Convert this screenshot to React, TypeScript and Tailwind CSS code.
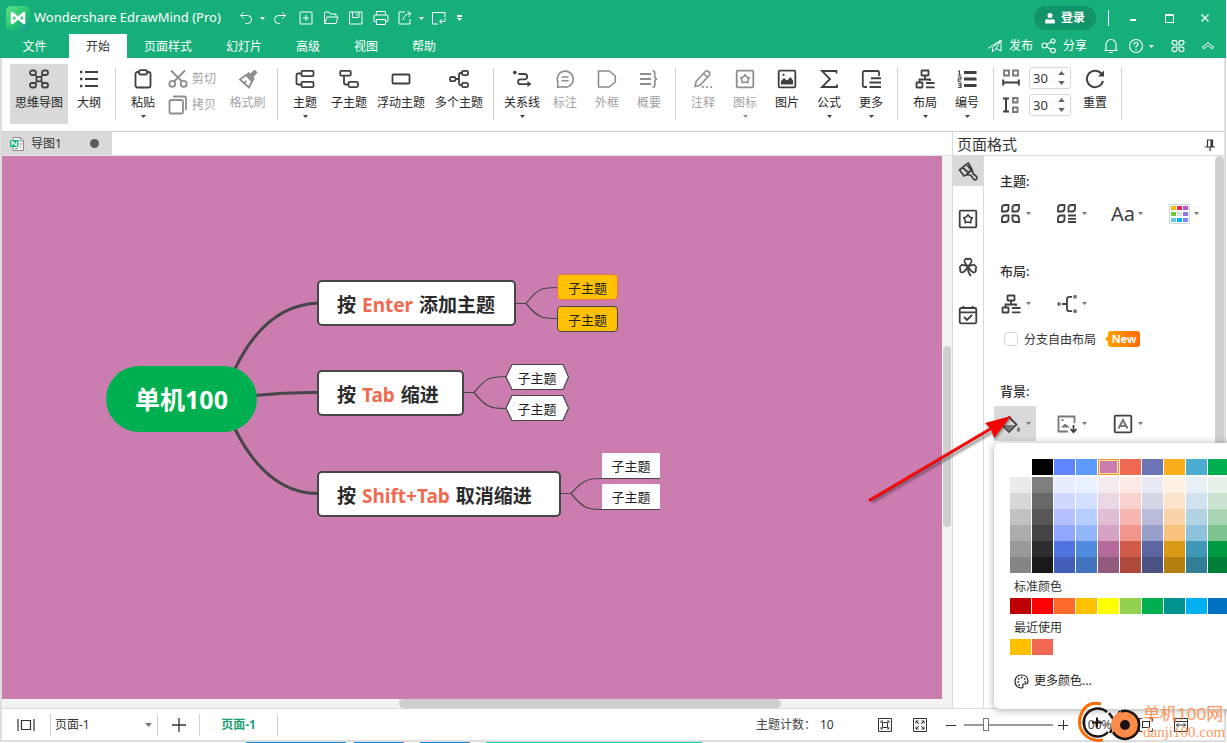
import type { ReactNode } from "react";

type IconProps = { children: ReactNode; className?: string; w?: number; h?: number };

// Stroke icon on a 20x20 grid
function Icon({ children, className = "", w = 20, h = 20 }: IconProps) {
  return (
    <svg
      width={w}
      height={h}
      viewBox={`0 0 ${w} ${h}`}
      fill="none"
      stroke="currentColor"
      strokeWidth="1.8"
      className={`shrink-0 ${className}`}
      aria-hidden="true"
    >
      {children}
    </svg>
  );
}

function Caret({ className = "" }: { className?: string }) {
  return (
    <svg width="5" height="3" viewBox="0 0 5 3" fill="currentColor" className={`shrink-0 ${className}`} aria-hidden="true">
      <path d="M0 0h5L2.5 3z" />
    </svg>
  );
}

const icons = {
  mindmap: (
    <Icon>
      <rect x="1" y="1.5" width="6" height="4.5" rx="2" />
      <rect x="13" y="1.5" width="6" height="4.5" rx="2" />
      <rect x="1" y="14" width="6" height="4.5" rx="2" />
      <rect x="13" y="14" width="6" height="4.5" rx="2" />
      <rect x="7.5" y="7.8" width="5" height="4.5" rx="1" />
      <path d="M6 5.5l2 2.5M14 5.5l-2 2.5M6 14.5l2-2.5M14 14.5l-2-2.5" />
    </Icon>
  ),
  outline: (
    <Icon>
      <path d="M6 3h13M6 10h13M6 17h13" strokeWidth="2" />
      <path d="M1 3h2.4M1 10h2.4M1 17h2.4" strokeWidth="2.4" />
    </Icon>
  ),
  paste: (
    <Icon>
      <rect x="2.5" y="3" width="15" height="15.5" rx="2" />
      <rect x="6" y="1.2" width="8" height="4.3" rx="1.5" fill="white" />
    </Icon>
  ),
  cut: (
    <Icon>
      <circle cx="4.3" cy="14.8" r="3" />
      <circle cx="15.7" cy="14.8" r="3" />
      <path d="M3 1.5l11 11M17 1.5l-11 11" />
    </Icon>
  ),
  copy: (
    <Icon>
      <rect x="1.5" y="5" width="13.5" height="13.5" rx="1.5" />
      <path d="M5 1.5h11a2 2 0 0 1 2 2V15" />
    </Icon>
  ),
  brush: (
    <Icon>
      <path d="M2 10.5l6-4.5 6 6.5-3 6z" />
      <path d="M8 6l2.5-2.5 2 1.5 4-4 2.5 2.5-3.5 4 .5 3-2 2z" fill="currentColor" strokeWidth="1" />
      <path d="M6.5 13.5l2-1.5" />
    </Icon>
  ),
  topic: (
    <Icon>
      <rect x="6.5" y="1.9" width="12" height="5.2" rx="1" />
      <rect x="6.5" y="12.9" width="12" height="5.2" rx="1" />
      <path d="M6.5 4.5H3A1.5 1.5 0 0 0 1.500 6v8A1.5 1.5 0 0 0 3 15.500h3.500" />
    </Icon>
  ),
  subtopic: (
    <Icon>
      <rect x="1.2" y="1.9" width="10.5" height="4.7" rx="1" />
      <rect x="9.5" y="12.9" width="9.500" height="5.2" rx="1.5" />
      <path d="M5 7v7a1.5 1.5 0 0 0 1.500 1.500h3" />
    </Icon>
  ),
  floating: (
    <Icon>
      <rect x="1.5" y="5.5" width="17" height="9" rx="1" />
    </Icon>
  ),
  multi: (
    <Icon>
      <rect x="1" y="8" width="5.5" height="4.2" rx="1.5" />
      <rect x="13" y="1.8" width="6" height="4.4" rx="1.5" />
      <rect x="13" y="13.8" width="6" height="4.4" rx="1.5" />
      <path d="M6.5 10H10M13 4h-1.500A1.5 1.5 0 0 0 10 5.500v9a1.5 1.5 0 0 0 1.500 1.500H13" />
    </Icon>
  ),
  relation: (
    <Icon>
      <circle cx="2.8" cy="3.500" r="1.4" fill="currentColor" strokeWidth="1" />
      <path d="M6.5 5H13a2.7 2.7 0 0 1 0 5.300H8.500a2.4 2.4 0 0 0 0 4.900H16" />
      <path d="M15.5 12v6l4-3z" fill="currentColor" stroke="none" />
    </Icon>
  ),
  callout: (
    <Icon>
      <path d="M2.5 18.200l.5-4.700A8 8 0 1 1 8 17.800z" strokeWidth="1.6" strokeLinejoin="round" />
      <path d="M6.5 8h7M6.5 11.800h7" strokeWidth="1.6" />
    </Icon>
  ),
  boundary: (
    <Icon>
      <path d="M1.5 2h10.800l6 5v6l-6 5H1.500z" strokeWidth="1.6" strokeLinejoin="round" />
    </Icon>
  ),
  summary: (
    <Icon>
      <path d="M1 5h11M1 10h11M1 15h11" />
      <path d="M13.5 1.800q2.300 0 2.300 2.200v3.500q0 2 2.200 2.500-2.200.5-2.200 2.500V16q0 2.200-2.300 2.200" strokeWidth="1.6" />
    </Icon>
  ),
  note: (
    <Icon>
      <path d="M2 17.500l1.200-5.200 9.300-10q1.200-1 2.500 0l1.500 1.400q1 1.200 0 2.400L7 16.200zM10.500 4.500l4 3.800" strokeWidth="1.6" strokeLinejoin="round" />
      <path d="M8.5 18h2.500M13 18h2M17 18h2" strokeWidth="1.6" />
    </Icon>
  ),
  mark: (
    <Icon>
      <rect x="1.7" y="1.7" width="16.6" height="16.6" rx="1" />
      <path d="M10 5.700l1.700 2.200 2.700.8-1.600 2.400v2.700l-2.800-.8-2.800.8v-2.700L5.600 8.700l2.700-.8z" strokeWidth="1.6" strokeLinejoin="round" />
    </Icon>
  ),
  picture: (
    <Icon>
      <rect x="1.7" y="1.7" width="16.6" height="16.6" rx="1" />
      <path d="M4 15.500v-3.500l3-3 3 2.500L13.500 8l2.500 3.500v4z" fill="currentColor" stroke="none" />
      <path d="M5.5 5.800h2" strokeWidth="2" />
    </Icon>
  ),
  formula: (
    <Icon>
      <path d="M17.5 4.500V2H3l8 8-8 8h15v-2.500" />
    </Icon>
  ),
  more: (
    <Icon>
      <path d="M18 7V3.500Q18 2 16.500 2H3.500Q1.800 2 1.800 3.500v13Q1.800 18 3.500 18H6" />
      <path d="M10 9.200h10M8.500 13.500H20M8.500 18H20" strokeWidth="2" />
    </Icon>
  ),
  layout: (
    <Icon>
      <rect x="6.5" y="1.5" width="7" height="5" rx="0.5" />
      <rect x="1.5" y="13.5" width="6" height="5" rx="0.5" />
      <path d="M10 6.500v3.500M4.500 13.500V10.500h10.500v1.500M11 14h8.500M11 18.300h8.500" />
    </Icon>
  ),
  numbering: (
    <Icon>
      <path d="M7 3.500h12.500M7 10h12.500M7 16.500h12.500" strokeWidth="3" />
      <path d="M1 2h1.500v4M1 6h3.300M1 8h3v2H1.300v2.200h3M1 14.300h3v4.200H1M1.500 16.400h2.500" strokeWidth="1.1" />
    </Icon>
  ),
  hspace: (
    <Icon w={18}>
      <path d="M2 2.500h5v5H2zM11 2.500h5v5h-5z" stroke="#777" />
      <path d="M1.200 11.500v6M16.800 11.500v6M1.500 14.500h15" strokeWidth="2" />
    </Icon>
  ),
  vspace: (
    <Icon w={18}>
      <path d="M11 3h4.500v4.500H11zM11 12.500h4.500V17H11z" stroke="#777" />
      <path d="M1 3.500h6M1 16.500h6M4 3.500v13" strokeWidth="2" />
    </Icon>
  ),
  reset: (
    <Icon>
      <path d="M17 5.500A8.200 8.200 0 1 0 18 12" strokeWidth="2" />
      <path d="M19 1.500v6h-6z" fill="currentColor" stroke="none" />
    </Icon>
  ),
};

type ToolProps = { icon: ReactNode; label: string; width?: string; caret?: boolean; muted?: boolean; active?: boolean };

function Tool({ icon, label, width = "w-[42px]", caret, muted, active }: ToolProps) {
  return (
    <button
      type="button"
      className={`flex h-[60px] shrink-0 flex-col items-center whitespace-nowrap pt-[5px] text-xs ${width} ${
        active ? "bg-[#d9d9d9]" : ""
      } ${muted ? "text-[#8e8e8e]" : "text-[#404040]"}`}
    >
      {icon}
      <span className={`mt-[6px] leading-4 ${muted ? "text-[#a3a3a3]" : "text-[#262626]"}`}>{label}</span>
      {caret && <Caret className="mt-1" />}
    </button>
  );
}

function Divider() {
  return <div className="ml-[5px] mr-[6px] mt-1 h-[52px] w-px shrink-0 bg-[#cfcfcf]" />;
}

function SpinBox({ label }: { label: string }) {
  return (
    <div className="flex h-[22px] w-[42px] items-center rounded-[3px] border border-[#d6d6dc] bg-white">
      <input type="text" aria-label={label} defaultValue="30" className="w-[28px] bg-transparent pl-[3px] text-[13px] leading-4 text-[#333] outline-none" />
      <div className="flex flex-col gap-[6px] text-[#666]">
        <button type="button" aria-label={`${label} +`} className="leading-none">
          <Caret className="h-[4px] w-[7px] rotate-180" />
        </button>
        <button type="button" aria-label={`${label} -`} className="leading-none">
          <Caret className="h-[4px] w-[7px]" />
        </button>
      </div>
    </div>
  );
}

const menuTabs = [
  { label: "文件", cls: "w-[69px] text-white" },
  { label: "开始", cls: "w-[58px] bg-white text-[#333]" },
  { label: "页面样式", cls: "w-[82px] text-white" },
  { label: "幻灯片", cls: "w-[70px] text-white" },
  { label: "高级", cls: "w-[58px] text-white" },
  { label: "视图", cls: "w-[58px] text-white" },
  { label: "帮助", cls: "w-[58px] text-white" },
];

const quickActions = [
  { name: "撤销", cls: "w-[24px]", d: "M6 2L2.500 5.500 6 9M3 5.500h6.500a4 4 0 0 1 0 8H7" },
  { name: "撤销选项", cls: "w-[8px]", caret: true },
  { name: "重做", cls: "w-[28px]", d: "M10 2l3.500 3.500L10 9M13 5.500H6.500a4 4 0 0 0 0 8H8" },
  { name: "新建", cls: "w-[24px]", d: "M2.500 2h11q.5 0 .5.500v11q0 .5-.5.500h-11q-.5 0-.5-.500v-11q0-.5.5-.500zM8 5v6M5 8h6" },
  { name: "打开", cls: "w-[25px]", d: "M1.500 13V3q0-1 1-1h3.500l1.500 2h5.500v2.500M1.500 13.500L4 7h11l-2 6.500z" },
  { name: "保存", cls: "w-[25px]", d: "M1.500 2h12.500v12H1.500zM4.500 2v5.500h6.500V2M9 3.500v2" },
  { name: "打印", cls: "w-[25px]", d: "M3.500 5V1.500h9V5M3.500 11.500h-2.500V6q0-1 1-1h12q1 0 1 1v5.500h-2.500M3.500 9.500h9v5h-9z" },
  { name: "导出", cls: "w-[24px]", d: "M8 2H2v12h11V9M6 10q.5-5.500 7.500-6.500M10.500 1.500l3.500 2L11.500 7" },
  { name: "导出选项", cls: "w-[8px]", caret: true },
  { name: "转换", cls: "w-[28px]", d: "M7 14H1.500V2.500H14V7M14 8v3.500H9M11 9l-2.500 2.500L11 14" },
];

function Header() {
  return (
    <header className="flex h-[58px] shrink-0 justify-between bg-[#16ae79] text-white">
      <div className="flex flex-col justify-between">
        <div className="flex h-[34px] items-center pl-[6px] pt-[2px]">
          <svg width="24" height="24" viewBox="0 0 24 24" aria-hidden="true">
            <defs>
              <linearGradient id="logo" x1="0" y1="0" x2="1" y2="1">
                <stop offset="0" stopColor="#5be584" />
                <stop offset="0.6" stopColor="#22c06f" />
                <stop offset="1" stopColor="#1698a4" />
              </linearGradient>
            </defs>
            <rect width="24" height="24" rx="5" fill="url(#logo)" />
            <path d="M6 17V7l12 10V7l-5.500 4.500M6 17l4.500-3.500" fill="none" stroke="white" strokeWidth="2.6" strokeLinejoin="round" strokeLinecap="round" />
          </svg>
          <span className="w-[204px] whitespace-nowrap pl-1 text-[13px]">Wondershare EdrawMind (Pro)</span>
          {quickActions.map((a) => (
            <button key={a.name} type="button" aria-label={a.name} className={`flex justify-center ${a.cls}`}>
              {a.caret ? (
                <Caret />
              ) : (
                <svg width="16" height="16" viewBox="0 0 16 16" fill="none" stroke="currentColor" strokeLinejoin="round" aria-hidden="true">
                  <path d={a.d} />
                </svg>
              )}
            </button>
          ))}
          <button type="button" aria-label="自定义" className="flex w-[12px] flex-col items-center gap-px">
            <span className="h-[2px] w-[5px] bg-white" />
            <Caret />
          </button>
        </div>
        <nav className="flex h-[24px]">
          {menuTabs.map((t) => (
            <button key={t.label} type="button" className={`pt-px text-center text-xs ${t.cls}`}>
              {t.label}
            </button>
          ))}
        </nav>
      </div>

      <div className="flex flex-col justify-between pr-[3px]">
        <div className="flex h-[34px] items-center justify-end pt-[2px]">
          <button type="button" className="flex h-6 w-[62px] items-center justify-center gap-[6px] rounded-full bg-[#12936a] text-xs font-bold">
            <svg width="10" height="11" viewBox="0 0 10 11" fill="currentColor" aria-hidden="true">
              <circle cx="5" cy="2.5" r="2.5" />
              <path d="M0 9q0-3 3-3l2 1 2-1q3 0 3 3 0 1.500-1 1.500H1Q0 10.500 0 9z" />
            </svg>
            登录
          </button>
          <span className="ml-[12px] mr-[6px] h-4 w-px bg-white" />
          <button type="button" aria-label="最小化" className="flex w-9 justify-center">
            <span className="mt-1 h-[2px] w-[6px] bg-white" />
          </button>
          <button type="button" aria-label="最大化" className="flex w-9 justify-center">
            <span className="h-[9px] w-[9px] border border-t-2 border-white" />
          </button>
          <button type="button" aria-label="关闭" className="flex w-9 justify-center">
            <svg width="8" height="8" viewBox="0 0 8 8" stroke="white" strokeWidth="1.3" aria-hidden="true">
              <path d="M0.5 0.500l7 7M7.500 0.500l-7 7" />
            </svg>
          </button>
        </div>
        <div className="flex h-[24px] items-center justify-end text-xs">
          <button type="button" className="flex items-center gap-[6px]">
            <Icon w={16} h={16}>
              <path d="M1 10.500L14 2v11l-5-2.500L14 2 5.500 9.500V14l3.500-3.500" strokeWidth="1" strokeLinejoin="round" />
            </Icon>
            发布
          </button>
          <button type="button" className="ml-2 flex items-center gap-[6px]">
            <Icon w={16} h={16}>
              <circle cx="3.5" cy="7.5" r="2.5" strokeWidth="1.1" />
              <circle cx="12" cy="3" r="2" strokeWidth="1.1" />
              <circle cx="12" cy="12.5" r="2.3" strokeWidth="1.1" />
              <path d="M6 6.500L10 4M6 9l4 2.500" strokeWidth="1.1" />
            </Icon>
            分享
          </button>
          <button type="button" aria-label="通知" className="ml-4">
            <Icon w={16} h={16}>
              <path d="M3 12.500V6.500a5 5 0 0 1 10 0v6M1.500 12.500h13M6.500 14.500h3" strokeWidth="1.1" />
            </Icon>
          </button>
          <button type="button" aria-label="帮助中心" className="ml-[9px] flex items-center gap-[5px]">
            <Icon w={16} h={16}>
              <circle cx="8" cy="8" r="6.5" strokeWidth="1.1" />
              <path d="M6 6.500q0-2 2-2t2 1.800q0 1.200-2 2.200v1M8 10.800v1.200" strokeWidth="1.2" />
            </Icon>
            <Caret />
          </button>
          <button type="button" aria-label="应用" className="ml-[17px]">
            <Icon w={14} h={14}>
              <path d="M6 6H3.500A2.500 2.300 0 1 1 6 3.500zM8 6h2.500A2.500 2.300 0 1 0 8 3.500zM6 8H3.500A2.500 2.300 0 1 0 6 10.500zM8 8h2.500A2.500 2.300 0 1 1 8 10.500z" strokeWidth="1.1" />
            </Icon>
          </button>
          <button type="button" aria-label="收起功能区" className="ml-4 mr-2">
            <Icon w={14} h={14}>
              <path d="M1 8.500L7 3.500l6 5-2 1-4-3-4 3z" strokeWidth="1" />
            </Icon>
          </button>
        </div>
      </div>
    </header>
  );
}

function Ribbon() {
  return (
    <div className="flex h-[74px] shrink-0 items-start border-b border-[#d0d0d0] bg-white pl-2 pt-[6px]">
      <Tool icon={icons.mindmap} label="思维导图" width="w-[58px]" active />
      <Tool icon={icons.outline} label="大纲" />
      <Divider />
      <Tool icon={icons.paste} label="粘贴" caret />
      <div className="flex w-[59px] shrink-0 flex-col gap-[6px] pl-1 pt-[5px] text-xs">
        <button type="button" className="flex h-5 items-center gap-1 whitespace-nowrap text-[#a3a3a3]">
          <span className="text-[#8e8e8e]">{icons.cut}</span>剪切
        </button>
        <button type="button" className="flex h-5 items-center gap-1 whitespace-nowrap text-[#a3a3a3]">
          <span className="text-[#8e8e8e]">{icons.copy}</span>拷贝
        </button>
      </div>
      <Tool icon={icons.brush} label="格式刷" width="w-[49px]" muted />
      <Divider />
      <Tool icon={icons.topic} label="主题" caret />
      <Tool icon={icons.subtopic} label="子主题" width="w-[46px]" />
      <Tool icon={icons.floating} label="浮动主题" width="w-[58px]" />
      <Tool icon={icons.multi} label="多个主题" width="w-[58px]" />
      <Divider />
      <Tool icon={icons.relation} label="关系线" width="w-[44px]" caret />
      <Tool icon={icons.callout} label="标注" muted />
      <Tool icon={icons.boundary} label="外框" muted />
      <Tool icon={icons.summary} label="概要" muted />
      <Divider />
      <Tool icon={icons.note} label="注释" muted />
      <Tool icon={icons.mark} label="图标" muted caret />
      <Tool icon={icons.picture} label="图片" />
      <Tool icon={icons.formula} label="公式" caret />
      <Tool icon={icons.more} label="更多" caret />
      <Divider />
      <Tool icon={icons.layout} label="布局" caret />
      <Tool icon={icons.numbering} label="编号" caret />
      <Divider />
      <div className="flex w-[74px] shrink-0 flex-col gap-[5px] pl-[2px] pt-[3px] text-[#404040]">
        <div className="flex items-center gap-[9px]">
          {icons.hspace}
          <SpinBox label="水平间距" />
        </div>
        <div className="flex items-center gap-[9px]">
          {icons.vspace}
          <SpinBox label="垂直间距" />
        </div>
      </div>
      <Tool icon={icons.reset} label="重置" />
      <Divider />
    </div>
  );
}

function Branch({ place, keys, after }: { place: string; keys: string; after: string }) {
  return (
    <div
      className={`absolute left-[315px] flex h-[46px] items-center gap-[6px] whitespace-nowrap rounded-[5px] border-2 border-[#464646] bg-white pl-[18px] pt-1 text-[19px] font-bold text-[#2b2b2b] ${place}`}
    >
      <span>按</span>
      <span className="text-[#f06a52]">{keys}</span>
      <span>{after}</span>
    </div>
  );
}

function Leaf({ place }: { place: string }) {
  return <div className={`absolute flex items-center justify-center pt-[3px] text-[13px] text-[#222] ${place}`}>子主题</div>;
}

function Canvas() {
  return (
    <div className="relative min-w-0 flex-1 overflow-hidden bg-[#cc7db0]">
      <svg className="absolute left-0 top-0" width="940" height="543" viewBox="2 156 940 543" fill="none" aria-hidden="true">
        <g stroke="#464646" strokeWidth="3">
          <path d="M235 369C256 325 284 304 319 303" />
          <path d="M250 396Q285 392 319 392.500" />
          <path d="M235 429C256 471 284 494 319 493.500" />
        </g>
        <g stroke="#464646" strokeWidth="1.2">
          <path d="M515 303.500h11C538 288 542 287.500 558 287.500M526 303.500C538 318 542 318.500 558 318.500" />
          <path d="M463 392.500h11C486 378 490 376.500 506 376.500M474 392.500C486 407 490 408.500 506 408.500" />
          <path d="M560 493.500h11C583 480 587 478.500 602 478.500M571 493.500C583 508 587 509.500 602 509.500" />
        </g>
        <g fill="white" stroke="#464646" strokeWidth="1.2">
          <path d="M512 364.500h51l5.500 12.500-5.500 12.500h-51l-6-12.500z" />
          <path d="M512 395.500h51l5.500 12.500-5.500 12.500h-51l-6-12.500z" />
        </g>
      </svg>
      <div className="absolute left-[104px] top-[210px] flex h-[66px] w-[151px] items-center justify-center rounded-full bg-[#00b050] pt-[2px] text-[25px] font-bold text-white">
        单机100
      </div>
      <Branch place="top-[124px] w-[199px]" keys="Enter" after="添加主题" />
      <Branch place="top-[214px] w-[147px]" keys="Tab" after="缩进" />
      <Branch place="top-[315px] w-[244px]" keys="Shift+Tab" after="取消缩进" />
      <Leaf place="left-[555px] top-[118px] h-[26px] w-[61px] rounded border border-[#f0704f] bg-[#ffc000]" />
      <Leaf place="left-[555px] top-[150px] h-[26px] w-[61px] rounded border border-[#464646] bg-[#ffc000]" />
      <Leaf place="left-[504px] top-[208px] h-[26px] w-[62px]" />
      <Leaf place="left-[504px] top-[239px] h-[26px] w-[62px]" />
      <Leaf place="left-[600px] top-[297px] h-[26px] w-[58px] border-b border-[#464646] bg-white" />
      <Leaf place="left-[600px] top-[328px] h-[26px] w-[58px] border-b border-[#464646] bg-white" />
    </div>
  );
}

function Workspace() {
  return (
    <div className="flex min-w-0 flex-1 flex-col">
      <div className="flex h-6 shrink-0 border-b border-[#e4e4e4]">
        <button type="button" className="flex w-[110px] items-center bg-[#d9d9d9] pl-2 text-xs text-[#333]">
          <svg width="14" height="14" viewBox="0 0 14 14" fill="none" aria-hidden="true">
            <path d="M3 .5h7.500l3 3v10H3z" fill="white" stroke="#8c8c8c" />
            <path d="M10 .5v3.500h3.500M9.500 7h3M9.500 10h2M5 11.500h3" stroke="#8c8c8c" />
            <rect y="3" width="8.5" height="7" fill="#13b878" />
            <path d="M2 8.500v-4l4.500 4v-4" stroke="white" strokeWidth="1.3" />
          </svg>
          <span className="ml-[7px]">导图1</span>
          <span className="ml-auto mr-[13px] h-[9px] w-[9px] rounded-full bg-[#5c5c5c]" />
        </button>
      </div>
      <div className="flex min-h-0 flex-1">
        <Canvas />
        <div className="w-[10px] shrink-0 bg-[#f3f3f3] pt-[190px]">
          <div className="ml-px h-[181px] w-[8px] rounded-full bg-[#cfcfcf]" />
        </div>
      </div>
      <div className="h-[9px] shrink-0 bg-[#f3f3f3] pl-[397px]">
        <div className="h-[9px] w-[382px] rounded-full bg-[#cfcfcf]" />
      </div>
    </div>
  );
}

const palette = [
  ["bg-white", "bg-[#ebebeb]", "bg-[#d7d7d7]", "bg-[#c2c2c2]", "bg-[#adadad]", "bg-[#999999]", "bg-[#858585]"],
  ["bg-black", "bg-[#7f7f7f]", "bg-[#686868]", "bg-[#575757]", "bg-[#444444]", "bg-[#2e2e2e]", "bg-[#191919]"],
  ["bg-[#5f85ff]", "bg-[#e8ecff]", "bg-[#d0d8ff]", "bg-[#b4c0ff]", "bg-[#92a6ff]", "bg-[#4f73df]", "bg-[#435fb9]"],
  ["bg-[#5f9bff]", "bg-[#e9f0ff]", "bg-[#d2dfff]", "bg-[#b5ceff]", "bg-[#92b7ff]", "bg-[#4f8bdf]", "bg-[#4174bc]"],
  ["bg-[#cc7db0] border border-[#f29436] outline-1 -outline-offset-2 outline-[#ffe294]", "bg-[#f6eaf1]", "bg-[#ebd6e3]", "bg-[#e0bfd5]", "bg-[#d7a3c4]", "bg-[#b46a9a]", "bg-[#935a80]"],
  ["bg-[#f06852]", "bg-[#fce8e5]", "bg-[#f9d1ce]", "bg-[#f6b7b1]", "bg-[#f2968d]", "bg-[#d15b48]", "bg-[#ad4a3c]"],
  ["bg-[#6b74b5]", "bg-[#e9eaf3]", "bg-[#d4d6e6]", "bg-[#babdd9]", "bg-[#9a9fca]", "bg-[#5c65a0]", "bg-[#4c5384]"],
  ["bg-[#f9af1c]", "bg-[#fdf0e3]", "bg-[#fce3cb]", "bg-[#fad3a9]", "bg-[#f9c37f]", "bg-[#da9a16]", "bg-[#b57f10]"],
  ["bg-[#4aadd0]", "bg-[#e8f0f6]", "bg-[#d1e2ee]", "bg-[#b2d3e4]", "bg-[#8dc1dc]", "bg-[#3f98b7]", "bg-[#337d97]"],
  ["bg-[#00b050]", "bg-[#e6f1e8]", "bg-[#cce3d1]", "bg-[#aad5b4]", "bg-[#7ec491]", "bg-[#009a45]", "bg-[#007f39]"],
];

const standard = [
  "bg-[#c00000]",
  "bg-[#ff0000]",
  "bg-[#fc6a2c]",
  "bg-[#ffc000]",
  "bg-[#ffff00]",
  "bg-[#92d050]",
  "bg-[#00b050]",
  "bg-[#00928f]",
  "bg-[#00b0f0]",
  "bg-[#0070c0]",
];

const recent = ["bg-[#ffc000]", "bg-[#f06852]"];

function SwatchRow({ colors, name }: { colors: string[]; name: string }) {
  return (
    <div className="flex gap-px">
      {colors.map((c, i) => (
        <button key={c} type="button" aria-label={`${name} ${i + 1}`} className={`h-4 w-[21px] shrink-0 ${c}`} />
      ))}
    </div>
  );
}

function ColorMenu() {
  return (
    <div className="absolute left-0 top-[37px] z-20 w-[266px] rounded-md bg-white pb-[18px] pl-4 pt-4 text-xs text-[#333] shadow-[0_1px_8px_rgba(0,0,0,0.35)]">
      <div className="flex gap-px">
        {palette.map((col, i) => (
          <div key={i} className="flex w-[21px] shrink-0 flex-col">
            {col.map((c, j) => (
              <button key={c} type="button" aria-label={`主题颜色 ${i + 1}-${j + 1}`} className={`h-4 first:mb-[2px] ${c}`} />
            ))}
          </div>
        ))}
      </div>
      <div className="flex h-[25px] items-center pl-1 pt-[2px]">标准颜色</div>
      <SwatchRow colors={standard} name="标准颜色" />
      <div className="flex h-[25px] items-center pl-1 pt-[2px]">最近使用</div>
      <SwatchRow colors={recent} name="最近使用" />
      <button type="button" className="mt-4 flex h-5 items-center gap-[5px] pl-1 text-[#222]">
        <Icon w={15} h={15}>
          <path d="M7 14q-6-1-6-6.500Q1.500 1 7.500 1q6 0 6.500 6 0 3-2.500 3H9.500q-1.500.5-.5 2 .5 2-2 2z" strokeWidth="1.1" />
          <path d="M4 5h1.500M7 3.500h1.500M10 5h1.500M3.500 8H5M4.500 11H6M10.500 8H12" strokeWidth="1.6" />
        </Icon>
        更多颜色...
      </button>
    </div>
  );
}

function Option({ name, children, active }: { name: string; children: ReactNode; active?: boolean }) {
  return (
    <button
      type="button"
      aria-label={name}
      className={`flex h-[35px] w-[42px] items-center gap-[5px] pl-[7px] text-[#404040] ${active ? "bg-[#d9d9d9]" : ""}`}
    >
      <span className="flex w-5 justify-center">{children}</span>
      <Caret className="text-[#777]" />
    </button>
  );
}

const petals = "M1 4q0-3 3-3h3.500v3.500q0 3-3 3H1zM11.500 4q0-3 3-3H18v3.500q0 3-3 3h-3.500zM1 14.500q0-3 3-3h3.500V15q0 3-3 3H1z";

const headingCls = "h-5 pl-[6px] text-[13px] font-medium leading-5 text-[#333]";

function FormatPanel() {
  return (
    <aside className="flex w-[272px] shrink-0 flex-col border-l border-[#d9d9d9]">
      <div className="flex h-6 shrink-0 items-center justify-between border-b border-[#dcdcdc] pl-1 pr-[9px] pt-[2px] text-[15px] text-[#333]">
        页面格式
        <button type="button" aria-label="固定面板">
          <Icon w={10} h={12} className="text-[#333]">
            <path d="M2.500 1h5v7h-5zM0 8h10M5 8v4" strokeWidth="1.2" />
            <path d="M6.500 1v7" strokeWidth="2" />
          </Icon>
        </button>
      </div>
      <div className="flex min-h-0 flex-1">
        <div className="flex w-[31px] shrink-0 flex-col gap-[18px] border-r border-[#dcdcdc] text-[#404040]">
          <button type="button" aria-label="页面格式" className="flex h-[30px] items-center justify-center bg-[#d9d9d9]">
            <Icon>
              <path
                d="M1.500 9L7 4.500q2-2.500 3.500-2.500l1.500 3 2 3.500L8 14l-2 1zM5 7l6 5M9 4l4 5M14 8.500l1 4 3.500 3q1 2-.5 3-1.500 1-2.500-.5l-3-4L9 14"
                strokeWidth="1.7"
                strokeLinejoin="round"
              />
            </Icon>
          </button>
          <button type="button" aria-label="图标" className="flex h-[30px] items-center justify-center">
            {icons.mark}
          </button>
          <button type="button" aria-label="剪贴画" className="flex h-[30px] items-center justify-center">
            <Icon>
              <path
                d="M10 9.500Q5 5 7 2.500q1.500-1.500 3 0 1.500-1.500 3 0 2 2.500-3 7zM10 9.500q-5.500-3-7.500-.5-1.500 1.500 0 3-1 2 .5 3.200Q6 16.500 10 9.500zM10 9.500q5.500-3 7.500-.5 1.500 1.500 0 3 1 2-.5 3.200Q14 16.500 10 9.500zM10 9.500q-.5 6 3 9.500"
                strokeWidth="1.7"
                strokeLinejoin="round"
              />
            </Icon>
          </button>
          <button type="button" aria-label="任务" className="flex h-[30px] items-center justify-center">
            <Icon>
              <rect x="1.7" y="3" width="16.6" height="15.3" rx="1.5" />
              <path d="M2 7.300h16M5.500 1v3M14.500 1v3M6 12l3 3 5-5" />
            </Icon>
          </button>
        </div>

        <div className="min-w-0 flex-1 pl-[10px] pt-[15px]">
          <h2 className={headingCls}>主题:</h2>
          <div className="mt-[5px] flex gap-[14px]">
            <Option name="主题样式">
              <Icon>
                <path d={petals} />
                <path d="M11.500 11.500h3.500q3 0 3 3V18h-3.500q-3 0-3-3z" />
              </Icon>
            </Option>
            <Option name="主题颜色组">
              <Icon>
                <path d={petals} />
                <path d="M11 11.500h8M11 14.800h8M11 18h8" />
              </Icon>
            </Option>
            <Option name="主题字体">
              <span className="text-xl leading-none">Aa</span>
            </Option>
            <Option name="配色">
              <svg width="21" height="20" viewBox="0 0 21 20" className="shrink-0" aria-hidden="true">
                <rect x=".5" y=".5" width="20" height="19" fill="white" stroke="#cfd6e6" />
                <path d="M2 2h5v4H2z" fill="#f0c000" />
                <path d="M8 2h5v4H8z" fill="#e0284f" />
                <path d="M14 2h5v4h-5z" fill="#c44fd0" />
                <path d="M2 8h5v4H2z" fill="#6ecb3c" />
                <path d="M8 8h5v4H8z" fill="#dddddd" />
                <path d="M14 8h5v4h-5z" fill="#8d74ee" />
                <path d="M2 14h5v4H2z" fill="#64c8d8" />
                <path d="M8 14h5v4H8z" fill="#00b8f8" />
                <path d="M14 14h5v4h-5z" fill="#7a86ff" />
              </svg>
            </Option>
          </div>

          <h2 className={`mt-[30px] ${headingCls}`}>布局:</h2>
          <div className="mt-[5px] flex gap-[14px]">
            <Option name="布局">{icons.layout}</Option>
            <Option name="连线样式">
              <Icon>
                <circle cx="2" cy="10" r="2" fill="#777" stroke="none" />
                <circle cx="18" cy="2.800" r="2" fill="#777" stroke="none" />
                <circle cx="18" cy="17.200" r="2" fill="#777" stroke="none" />
                <path d="M5 10h5M15 2.800h-2.500Q10 2.800 10 5v10q0 2.200 2.500 2.200H15" />
              </Icon>
            </Option>
          </div>
          <div className="mt-[8px] flex h-5 items-center pl-[10px] text-xs text-[#333]">
            <input id="free-branch" type="checkbox" className="h-[14px] w-[14px] appearance-none rounded-sm border border-[#d4d4d8] bg-white" />
            <label htmlFor="free-branch" className="ml-[6px] pt-px">
              分支自由布局
            </label>
            <span className="ml-[9px] h-0 w-0 border-y-[3px] border-r-[3px] border-y-transparent border-r-[#ffa000]" />
            <span className="flex h-4 w-8 items-center justify-center rounded-[3px] bg-linear-to-r from-[#ffa000] to-[#ff6a00] text-[11px] font-bold text-white">
              New
            </span>
          </div>

          <h2 className={`mt-[32px] ${headingCls}`}>背景:</h2>
          <div className="relative mt-[5px] flex gap-[14px]">
            <Option name="背景颜色" active>
              <Icon>
                <path d="M8 3l7.500 7.500L8 18 .8 10.500z" />
                <path d="M2 11h12.500L8 17z" fill="#777" stroke="none" />
                <path d="M17.500 13q2.500 4 0 4.500-2.500-.5 0-4.500z" fill="#777" stroke="#777" strokeWidth="1" />
              </Icon>
            </Option>
            <Option name="背景图片">
              <Icon>
                <path d="M17.500 9V2.500h-16v15H11" stroke="#777" />
                <path d="M4 13.500l4-4 5 4z" fill="#777" stroke="none" />
                <path d="M4.500 6h2" stroke="#777" strokeWidth="2" />
                <path d="M16.500 11v7M13.500 15l3 3.200 3-3.200" />
              </Icon>
            </Option>
            <Option name="水印">
              <Icon>
                <rect x="1.700" y="1.700" width="16.600" height="16.600" rx="1" />
                <path d="M5.500 14.500L10 6l4.500 8.500M7 12h6" stroke="#777" strokeWidth="2" />
              </Icon>
            </Option>
            <ColorMenu />
          </div>
        </div>
        <div className="w-[9px] shrink-0 rounded-t-full bg-[#cfcfcf]" />
      </div>
    </aside>
  );
}

function StatusBar() {
  return (
    <footer className="flex h-[32px] shrink-0 items-center border-t border-[#d9d9d9] bg-white text-xs text-[#333]">
      <button type="button" aria-label="页面视图" className="flex w-[48px] justify-center">
        <Icon w={18} h={12}>
          <path d="M1 0v12M17 0v12M4.500 1.500h9v9h-9z" strokeWidth="1.2" />
        </Icon>
      </button>
      <span className="h-[22px] w-px bg-[#cfcfcf]" />
      <div className="flex w-[106px] items-center pl-1 pr-[5px]">
        <select aria-label="页面" className="flex-1 appearance-none bg-transparent outline-none">
          <option>页面-1</option>
        </select>
        <Icon w={7} h={4} className="text-[#777]">
          <path d="M0 0h7L3.500 4z" fill="currentColor" stroke="none" />
        </Icon>
      </div>
      <span className="h-[22px] w-px bg-[#cfcfcf]" />
      <button type="button" aria-label="新增页面" className="flex w-[41px] justify-center">
        <Icon w={14} h={14}>
          <path d="M7 0v14M0 7h14" strokeWidth="1.3" />
        </Icon>
      </button>
      <span className="h-[22px] w-px bg-[#cfcfcf]" />
      <button type="button" className="w-[77px] font-bold text-[#1c9e72]">
        页面-1
      </button>
      <span className="h-[22px] w-px bg-[#cfcfcf]" />

      <div className="ml-auto flex items-center pr-[36px]">
        <span className="text-[#444]">主题计数：</span>
        <span className="w-[62px] pl-1">10</span>
        <button type="button" aria-label="适应窗口">
          <Icon w={14} h={14}>
            <path d="M.5.500h13v13H.500zM4.500 4.500h5v5h-5zM3 5V3h2M9 3h2v2M11 9v2H9M5 11H3V9" strokeWidth="1" />
          </Icon>
        </button>
        <button type="button" aria-label="全屏" className="ml-[21px]">
          <Icon w={14} h={14}>
            <path d="M.5.500h13v13H.500zM3 5.500V3h2.500M3 3l3 3M8.500 3H11v2.500M11 3L8 6M11 8.500V11H8.500M11 11L8 8M5.500 11H3V8.500M3 11l3-3" strokeWidth="1" />
          </Icon>
        </button>
        <button type="button" aria-label="缩小" className="ml-[19px]">
          <Icon w={10} h={10}>
            <path d="M0 5.500h10" strokeWidth="1" />
          </Icon>
        </button>
        <input
          type="range"
          aria-label="缩放"
          defaultValue="23"
          className="ml-2 mr-[5px] h-[13px] w-[89px] appearance-none bg-transparent [&::-webkit-slider-runnable-track]:h-[2px] [&::-webkit-slider-runnable-track]:bg-[#9a9a9a] [&::-webkit-slider-thumb]:-mt-[6px] [&::-webkit-slider-thumb]:h-[13px] [&::-webkit-slider-thumb]:w-[6px] [&::-webkit-slider-thumb]:appearance-none [&::-webkit-slider-thumb]:border [&::-webkit-slider-thumb]:border-[#777] [&::-webkit-slider-thumb]:bg-white"
        />
        <button type="button" aria-label="放大" className="mr-[13px]">
          <Icon w={10} h={10}>
            <path d="M0 5.500h10M5.500 0v10" strokeWidth="1" />
          </Icon>
        </button>
        <span className="w-[58px] text-[#444]">100%</span>
        <button type="button" aria-label="适应页面">
          <Icon w={14} h={14}>
            <path d="M3.500 3.500h7v6h-7zM.5 3.500v-3h3M10.500.500h3v3M13.500 10.500v3h-3M3.500 13.500h-3v-3" strokeWidth="1.1" />
          </Icon>
        </button>
        <button type="button" aria-label="适应宽度" className="ml-[21px]">
          <Icon w={14} h={14}>
            <path d="M.5.500h13v13H.500zM2.500 7h9M4.500 5l-2 2 2 2M9.500 5l2 2-2 2M.5 3.500h13" strokeWidth="1" />
          </Icon>
        </button>
      </div>
    </footer>
  );
}

function Watermark() {
  return (
    <div className="pointer-events-none absolute bottom-0 right-0 z-30 flex h-[42px] w-[150px] items-center">
      <svg width="66" height="42" viewBox="1077 701 66 42" fill="none" className="shrink-0" aria-hidden="true">
        <path d="M1101 704Q1088 701 1082 712q-6 12 2 22 8 8 19 6" stroke="#ff6a00" strokeWidth="3" />
        <path d="M1107 712A14 14 0 1 0 1108 732" stroke="#1c1414" strokeWidth="2.500" />
        <path d="M1092 722.500h10M1097 717.500v10" stroke="#1c1414" strokeWidth="2" />
        <path d="M1109 713l5 7M1120 711l-10 22" stroke="#1c1414" strokeWidth="2.500" />
        <circle cx="1125" cy="725" r="14" fill="#ff8b48" />
        <path d="M1121 711.500A14 14 0 1 1 1113 732" stroke="#1c1414" strokeWidth="2.500" />
        <circle cx="1125" cy="725" r="5" fill="#1c1414" />
      </svg>
      <div className="flex flex-col whitespace-nowrap text-[#ff8b48]/90">
        <span className="text-[17px] leading-[20px]">单机100网</span>
        <span className="font-['Liberation_Serif',serif] text-[15px] leading-[17px]">danji100.com</span>
      </div>
    </div>
  );
}

export default function App() {
  return (
    <div className="relative flex h-screen flex-col overflow-hidden bg-white pr-px font-['Noto_Sans','Noto_Sans_CJK_SC',sans-serif]">
      <Header />
      <div className="flex min-h-0 flex-1 flex-col border-x-2 border-[#dedede]">
        <Ribbon />
        <div className="flex min-h-0 flex-1">
          <Workspace />
          <FormatPanel />
        </div>
        <StatusBar />
      </div>
      <div className="h-[2px] shrink-0 bg-[#dedede]" />
      <div className="flex h-px shrink-0 pl-[246px]">
        <span className="w-[100px] bg-[#1288e0]" />
        <span className="ml-2 w-[50px] bg-[#1288e0]" />
        <span className="ml-4 w-[50px] bg-[#1288e0]" />
        <span className="ml-4 w-[216px] bg-[#17cfa0]" />
      </div>

      <svg
        className="pointer-events-none absolute right-[210px] top-[410px] z-10"
        width="150"
        height="100"
        viewBox="867 410 150 100"
        aria-hidden="true"
      >
        <defs>
          <filter id="soft" x="-10%" y="-10%" width="120%" height="120%">
            <feGaussianBlur stdDeviation="1.2" />
          </filter>
        </defs>
        <g filter="url(#soft)" opacity="0.45">
          <path d="M872 502L994 431" stroke="#222" strokeWidth="3" />
          <path d="M1012 418L986 426l6 5 3 9z" fill="#222" />
        </g>
        <path d="M870 500L992 428" stroke="#d60000" strokeWidth="3" strokeLinecap="round" />
        <path d="M871 499L992 427.500" stroke="#ff1010" strokeWidth="1.5" />
        <path d="M1011 416L985 423l6 6 3 9z" fill="#f80000" />
      </svg>
      <Watermark />
    </div>
  );
}
